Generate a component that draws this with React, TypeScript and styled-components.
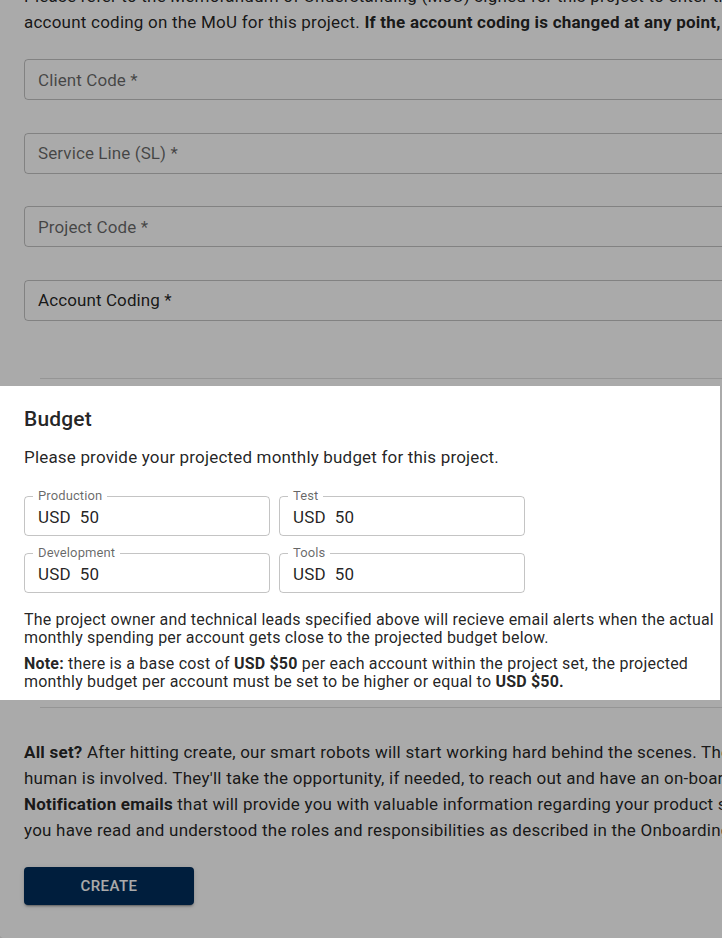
import React from "react";
import styled, { createGlobalStyle } from "styled-components";

const Global = createGlobalStyle`
  html, body { margin: 0; padding: 0; }
  body {
    background: #ebebeb;
    font-family: Roboto, "Liberation Sans", Arial, sans-serif;
    color: rgba(0, 0, 0, 0.87);
  }
  * { box-sizing: border-box; }
`;

const Page = styled.div`
  height: 938px;
  overflow: hidden;
  position: relative;
`;

const Card = styled.div`
  margin: -17px 0 0 -4px;
  width: 1300px;
  background: #ffffff;
  border-radius: 0 0 14px 14px;
  padding: 0 0 35px 28px;
  display: flex;
  flex-direction: column;
`;

const Body = styled.p<{ $top?: number }>`
  margin: ${(p) => p.$top ?? 0}px 0 0;
  font-size: 17px;
  line-height: 26px;
  letter-spacing: 0.22px;
  white-space: nowrap;
  color: rgba(0, 0, 0, 0.87);
  b { font-weight: 700; }
`;

const Fields = styled.div`
  margin-top: 24px;
  display: flex;
  flex-direction: column;
  gap: 32.67px;
  padding-right: 28px;
`;

const OutlinedField = styled.div<{ $filled?: boolean }>`
  height: 41px;
  border: 1px solid rgba(0, 0, 0, 0.23);
  border-radius: 4px;
  display: flex;
  align-items: center;
  padding-left: 13px;
  font-size: 17px;
  letter-spacing: 0.1px;
  color: ${(p) => (p.$filled ? "rgba(0,0,0,0.87)" : "rgba(0,0,0,0.6)")};
`;

const Divider = styled.hr<{ $top: number }>`
  margin: ${(p) => p.$top}px 0 0 16px;
  border: none;
  height: 1px;
  background: rgba(0, 0, 0, 0.12);
`;

const Spotlight = styled.section`
  position: relative;
  z-index: 2;
  margin: 7px 0 0 -24px;
  width: 720px;
  padding: 21px 4px 9px 24px;
  background: #ffffff;
  box-shadow: 0 0 0 3000px rgba(0, 0, 0, 0.333);
`;

const Heading = styled.h2`
  margin: 0;
  font-size: 21px;
  line-height: 24px;
  font-weight: 500;
  letter-spacing: 0.15px;
  color: rgba(0, 0, 0, 0.87);
`;

const Lead = styled.p`
  margin: 14px 0 0;
  font-size: 17px;
  line-height: 24px;
  letter-spacing: 0.18px;
`;

const BudgetGrid = styled.div`
  margin-top: 27px;
  display: grid;
  grid-template-columns: 246px 246px;
  column-gap: 9px;
  row-gap: 17px;
`;

const BudgetBox = styled.div`
  position: relative;
  height: 40px;
  border: 1px solid rgba(0, 0, 0, 0.23);
  border-radius: 4px;
  display: flex;
  align-items: center;
  gap: 9px;
  padding: 2px 0 0 13px;
  font-size: 17px;
  letter-spacing: 0.15px;
  color: rgba(0, 0, 0, 0.87);
`;

const Legend = styled.span`
  position: absolute;
  top: -8px;
  left: 8px;
  padding: 0 5px 0 5px;
  background: #ffffff;
  font-size: 13px;
  line-height: 14px;
  letter-spacing: 0.1px;
  color: rgba(0, 0, 0, 0.6);
`;

const Small = styled.p<{ $top: number }>`
  margin: ${(p) => p.$top}px 0 0;
  font-size: 16px;
  line-height: 18px;
  letter-spacing: 0.2px;
  color: rgba(0, 0, 0, 0.87);
  b { font-weight: 700; }
`;

const CreateButton = styled.button`
  margin-top: 24px;
  width: 170px;
  height: 38px;
  border: none;
  border-radius: 4px;
  background: #002e5c;
  color: #ffffff;
  font-family: Roboto, "Liberation Sans", Arial, sans-serif;
  font-size: 15px;
  font-weight: 500;
  letter-spacing: 0.46px;
  text-transform: uppercase;
  box-shadow: 0 3px 1px -2px rgba(0, 0, 0, 0.2), 0 2px 2px 0 rgba(0, 0, 0, 0.14),
    0 1px 5px 0 rgba(0, 0, 0, 0.12);
`;

const accountFields = [
  { label: "Client Code *", filled: false },
  { label: "Service Line (SL) *", filled: false },
  { label: "Project Code *", filled: false },
  { label: "Account Coding *", filled: true },
];

const budgets = ["Production", "Test", "Development", "Tools"];

export default function App() {
  return (
    <>
      <Global />
      <Page>
        <Card>
          <Body>
            Please refer to the Memorandum of Understanding (MoU) signed for this project to enter the
            <br />
            account coding on the MoU for this project.{" "}
            <b>
              If the account coding is changed at any point, all charges in the current quarter will be
              moved to the new account coding.
            </b>
          </Body>
          <Fields>
            {accountFields.map((f) => (
              <OutlinedField key={f.label} $filled={f.filled}>
                {f.label}
              </OutlinedField>
            ))}
          </Fields>
          <Divider $top={57} />
          <Spotlight>
            <Heading>Budget</Heading>
            <Lead>Please provide your projected monthly budget for this project.</Lead>
            <BudgetGrid>
              {budgets.map((b) => (
                <BudgetBox key={b}>
                  <Legend>{b}</Legend>
                  <span>USD</span>
                  <span>50</span>
                </BudgetBox>
              ))}
            </BudgetGrid>
            <Small $top={18}>
              The project owner and technical leads specified above will recieve email alerts when the actual
              monthly spending per account gets close to the projected budget below.
            </Small>
            <Small $top={8}>
              <b>Note:</b> there is a base cost of <b>USD $50</b> per each account within the project set, the
              projected monthly budget per account must be set to be higher or equal to <b>USD $50.</b>
            </Small>
          </Spotlight>
          <Divider $top={7} />
          <Body $top={31}>
            <b>All set?</b> After hitting create, our smart robots will start working hard behind the scenes.
            There is one step, the approval process, where a
            <br />
            human is involved. They'll take the opportunity, if needed, to reach out and have an on-boarding
            conversation with you. Also, look out for our
            <br />
            <b>Notification emails</b> that will provide you with valuable information regarding your product
            status and details. By clicking create, you confirm that
            <br />
            you have read and understood the roles and responsibilities as described in the Onboarding Guide.
          </Body>
          <CreateButton>Create</CreateButton>
        </Card>
      </Page>
    </>
  );
}
